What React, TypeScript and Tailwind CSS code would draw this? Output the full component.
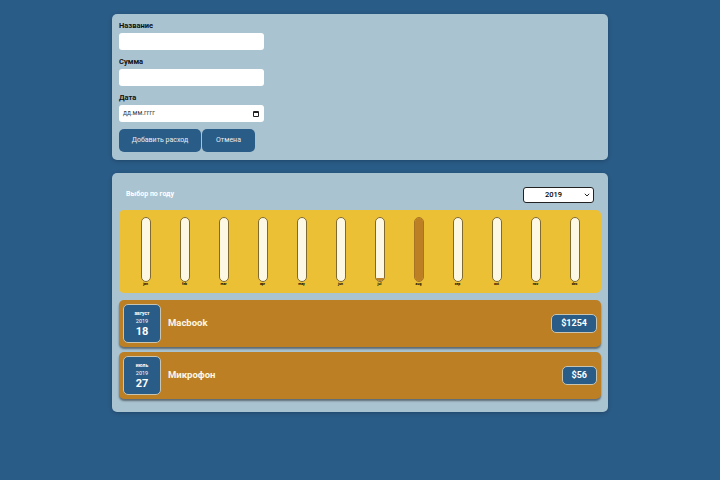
import React from "react";

const months = [
  { name: "jan", fill: 0 },
  { name: "feb", fill: 0 },
  { name: "mar", fill: 0 },
  { name: "apr", fill: 0 },
  { name: "may", fill: 0 },
  { name: "jun", fill: 0 },
  { name: "jul", fill: 4 },
  { name: "aug", fill: 100 },
  { name: "sep", fill: 0 },
  { name: "oct", fill: 0 },
  { name: "nov", fill: 0 },
  { name: "dec", fill: 0 },
];

const expenses = [
  { month: "август", year: "2019", day: "18", title: "Macbook", price: "$1254" },
  { month: "июль", year: "2019", day: "27", title: "Микрофон", price: "$56" },
];

const Field: React.FC<{ label: string; children?: React.ReactNode }> = ({ label, children }) => (
  <div className="flex flex-col">
    <label className="text-[7.5px] leading-[11px] font-bold text-[#111] mb-[2px]">{label}</label>
    {children || <input type="text" className="w-[145px] h-[17px] bg-white rounded-[3px] outline-none" />}
  </div>
);

const App: React.FC = () => {
  return (
    <div className="min-h-[480px] bg-[#2a5c88] pt-[14px] font-['Roboto',sans-serif]">
      <div className="w-[496px] mx-auto">
        <div className="h-[146px] bg-[#a9c3d1] rounded-[5px] pt-[6px] pl-[7px] flex flex-col gap-[6px] shadow-[0_1px_4px_rgba(0,0,0,0.25)]">
          <Field label="Название" />
          <Field label="Сумма" />
          <Field label="Дата">
            <div className="w-[145px] h-[17px] bg-white rounded-[3px] flex items-center justify-between pl-[4px] pr-[5px]">
              <span className="text-[6.5px] text-[#444]">дд.мм.гггг</span>
              <svg width="6" height="6" viewBox="0 0 6 6" fill="none">
                <path d="M0.5 0.5h5v5h-5z" stroke="#222" />
                <path d="M0.5 1.5h5" stroke="#222" />
              </svg>
            </div>
          </Field>
          <div className="flex gap-px mt-px">
            <button className="w-[82px] h-[23px] bg-[#2a5c88] rounded-[5px] text-[#e8eef2] text-[7px]">Добавить расход</button>
            <button className="w-[53px] h-[23px] bg-[#2a5c88] rounded-[5px] text-[#e8eef2] text-[7px]">Отмена</button>
          </div>
        </div>

        <div className="mt-[13px] h-[239px] bg-[#a9c3d1] rounded-[5px] px-[7px] flex flex-col shadow-[0_1px_4px_rgba(0,0,0,0.25)]">
          <div className="h-[37px] flex items-center justify-between pl-[7px] pr-[7px]">
            <span className="text-[7px] font-bold text-white mt-[5px]">Выбор по году</span>
            <div className="relative mt-[7px]">
              <select
                defaultValue="2019"
                className="block appearance-none w-[71px] h-[16px] bg-white border border-[#222] rounded-[3px] text-[7.5px] font-medium text-black text-center pr-[10px]"
              >
                <option value="2019">2019</option>
              </select>
              <svg className="absolute right-[4px] top-[6px]" width="6" height="4" viewBox="0 0 6 4" fill="none">
                <path d="M0.8 0.8L3 3L5.2 0.8" stroke="#222" strokeWidth="1" />
              </svg>
            </div>
          </div>

          <div className="h-[83px] bg-[#ecc035] rounded-[5px] flex px-[7px] pt-[7px]">
            {months.map((m) => (
              <div key={m.name} className="flex flex-col items-center flex-1">
                <div
                  className={
                    m.fill === 100
                      ? "w-[10px] h-[65px] bg-[#fdf8e3] border border-[#a67424] rounded-full flex flex-col justify-end overflow-hidden"
                      : "w-[10px] h-[65px] bg-[#fdf8e3] border border-[#806a30] rounded-full flex flex-col justify-end overflow-hidden"
                  }
                >
                  <div className="bg-[#bc7f24]" style={{ height: `${m.fill}%` }} />
                </div>
                <span className="text-[3.5px] leading-[5px] font-bold text-black">{m.name}</span>
              </div>
            ))}
          </div>

          <div className="mt-[7px] flex flex-col gap-[5px]">
            {expenses.map((e) => (
              <div
                key={e.title}
                className="h-[47px] bg-[#bc7f24] rounded-[5px] flex items-center pl-[4px] pr-[4px] shadow-[0_2px_2px_rgba(0,0,0,0.45)]"
              >
                <div className="w-[38px] h-[39px] pt-[2px] bg-[#2a5c88] border border-[#c9c4b0] rounded-[5px] flex flex-col items-center justify-center text-white">
                  <span className="text-[5px] leading-[7px] font-bold">{e.month}</span>
                  <span className="text-[5.5px] leading-[8px]">{e.year}</span>
                  <span className="text-[11px] leading-[14px] font-bold">{e.day}</span>
                </div>
                <span className="ml-[7px] flex-1 text-[#fdf8e3] text-[9.5px] font-bold">{e.title}</span>
                <span className="h-[19px] px-[9px] flex items-center bg-[#2a5c88] border border-[#c9c4b0] rounded-[5px] text-white text-[9px] font-bold">
                  {e.price}
                </span>
              </div>
            ))}
          </div>
        </div>
      </div>
    </div>
  );
};

export default App;
